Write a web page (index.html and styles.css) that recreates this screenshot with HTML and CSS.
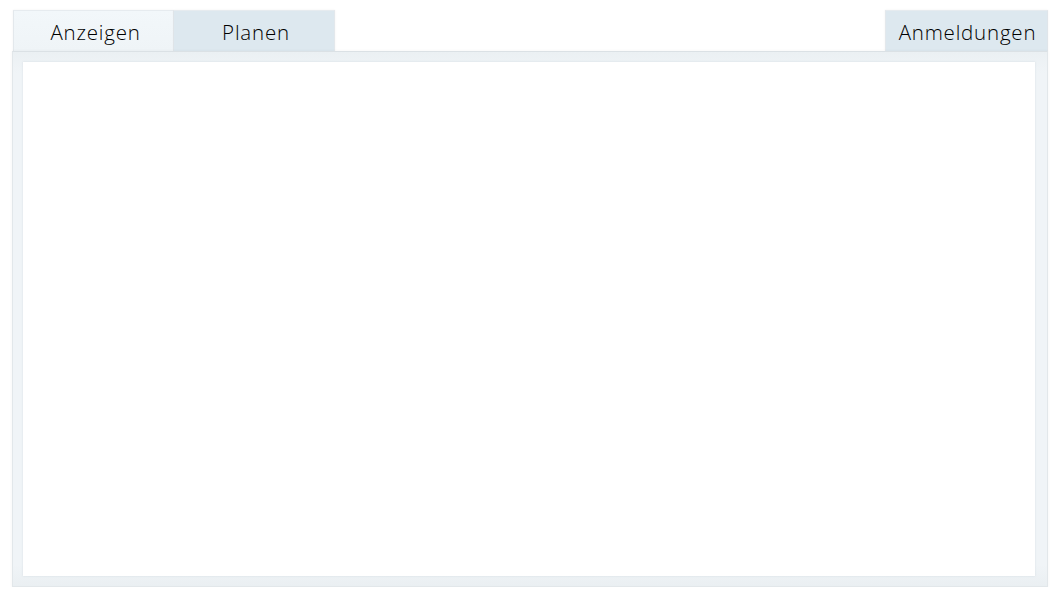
FILE: index.html
```html
<!DOCTYPE html>
<html lang="de">
<head>
<meta charset="utf-8">
<title>Tabs</title>
<link rel="stylesheet" href="styles.css">
</head>
<body>
<div class="app">
  <div class="tabbar">
    <div class="tab tab-active">Anzeigen</div>
    <div class="tab">Planen</div>
    <div class="spacer"></div>
    <div class="tab tab-right">Anmeldungen</div>
  </div>
  <div class="panel">
    <div class="content"></div>
  </div>
</div>
</body>
</html>
```
FILE: styles.css
```css
html, body {
  margin: 0;
  padding: 0;
  background: #ffffff;
}
body {
  font-family: "Open Sans", "Noto Sans", sans-serif;
  color: #000000;
}
.app {
  padding: 10px 12px 0 12px;
  display: flex;
  flex-direction: column;
}
.tabbar {
  display: flex;
  height: 41px;
  padding-left: 1px;
}
.tab {
  width: 161px;
  height: 41px;
  box-sizing: border-box;
  display: flex;
  align-items: center;
  justify-content: center;
  font-size: 20.5px;
  font-weight: 300;
  letter-spacing: 0.8px;
  background: #dde8ef;
  border-top: 1px solid #e6ebef;
  border-right: 1px solid #e3e8ec;
  box-shadow: 0 0 2px rgba(0,0,0,0.06);
  padding-top: 2px;
  padding-left: 4px;
}
.tab-active {
  background: linear-gradient(#f2f7fa, #eff4f7);
  border-left: 1px solid #e3e8ec;
}
.tab-right {
  width: 163px;
  border-left: 1px solid #e3e8ec;
  border-right: 1px solid #dfe5ea;
  padding-left: 2px;
}
.spacer {
  flex: 1;
}
.panel {
  height: 536px;
  box-sizing: border-box;
  padding: 10px 12px 10px 10px;
  background: linear-gradient(#ebf0f3, #f0f4f7 4%, #f0f4f7 96%, #eaeff2);
  border: 1px solid #e2e7ea;
  border-top-color: #dbe1e5;
  box-shadow: 0 0 3px rgba(0,0,0,0.05);
}
.content {
  height: 100%;
  background: #ffffff;
  box-shadow: 0 0 2px rgba(120,140,155,0.2);
}
```
